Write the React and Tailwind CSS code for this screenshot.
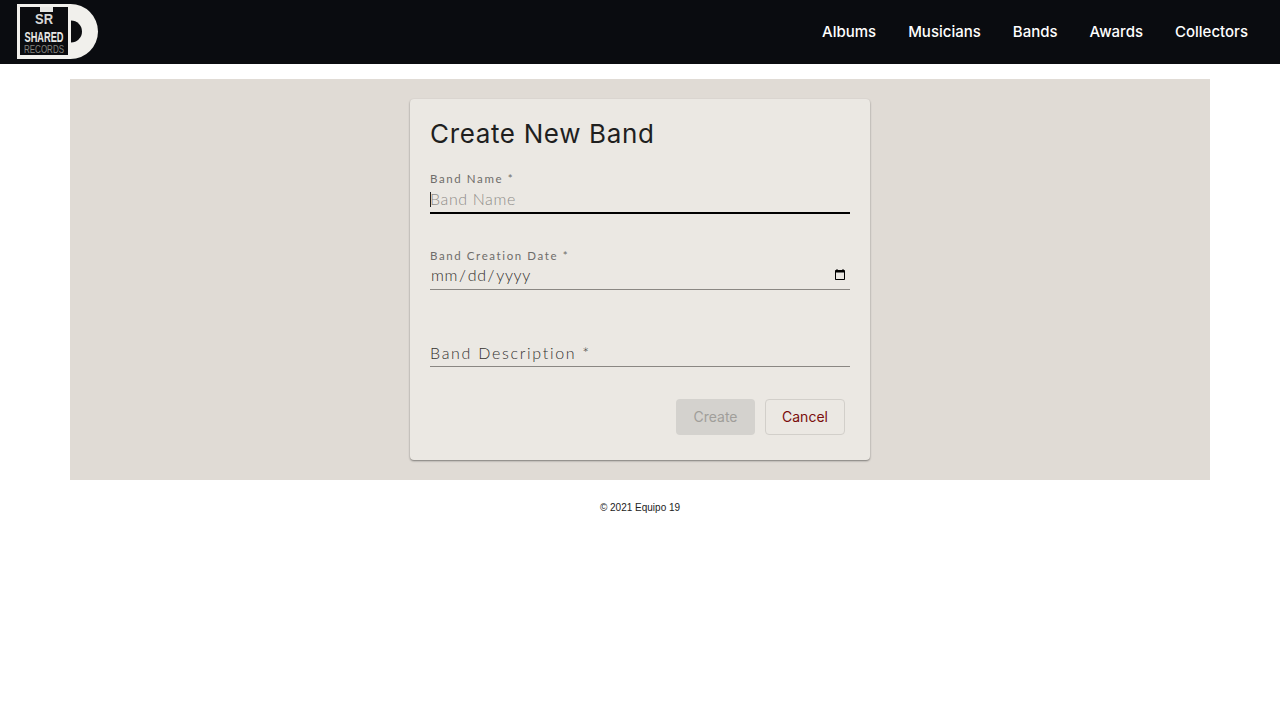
import React from "react";

const sans = "font-['Inter','Noto_Sans',sans-serif]";
const thin = "font-['Lato','Noto_Sans',sans-serif]";

function Logo() {
  return (
    <svg width="84" height="58" viewBox="0 0 84 58" className="block">
      <circle cx="55.5" cy="28.5" r="27.5" fill="#f1f0ec" />
      <circle cx="56" cy="28.5" r="11" fill="#0b0c0f" />
      <path d="M2 1H56V56H2Z" fill="#f1f0ec" />
      <path d="M5 4H53V52H5Z" fill="#0b0c0f" />
      <path d="M25 4H38V9H25Z" fill="#e6e6e3" />
      <text x="29" y="21" textAnchor="middle" fontFamily="'Liberation Sans',sans-serif" fontWeight="700" fontSize="15" fill="#d8d8d6" textLength="18" lengthAdjust="spacingAndGlyphs">SR</text>
      <text x="29" y="39" textAnchor="middle" fontFamily="'Liberation Sans',sans-serif" fontWeight="700" fontSize="14" fill="#e8e8e6" textLength="39" lengthAdjust="spacingAndGlyphs">SHARED</text>
      <text x="29" y="50" textAnchor="middle" fontFamily="'Liberation Sans',sans-serif" fontSize="11" fill="#85857f" textLength="40" lengthAdjust="spacingAndGlyphs">RECORDS</text>
    </svg>
  );
}

function NavLink({ children }) {
  return (
    <a className={`flex h-[34px] items-center rounded-md px-4 text-[15px] font-medium leading-none text-white ${sans}`}>
      {children}
    </a>
  );
}

function Field({ label, children, className = "h-10 border-b border-[#8a8783]" }) {
  return (
    <div className={`relative flex flex-col justify-end ${className}`}>
      {label && (
        <label className={`absolute left-0 top-[-1px] text-[11.5px] leading-[13px] tracking-[1.6px] text-[#6f6d6a] ${thin}`}>
          {label}
        </label>
      )}
      {children}
    </div>
  );
}

export default function App() {
  return (
    <div className="min-h-[720px] bg-white">
      <header className="flex h-16 items-center justify-between bg-[#0a0c10] pl-[15px] pr-4">
        <Logo />
        <nav className="mb-[2px] flex items-center">
          <NavLink>Albums</NavLink>
          <NavLink>Musicians</NavLink>
          <NavLink>Bands</NavLink>
          <NavLink>Awards</NavLink>
          <NavLink>Collectors</NavLink>
        </nav>
      </header>

      <main className="mx-[70px] mt-[15px] flex justify-center bg-[#e0dbd5] py-5">
        <section className="h-[361px] w-[460px] rounded bg-[#ebe8e3] p-5 shadow-[0_1px_2px_rgba(0,0,0,0.45)]">
          <h1 className={`text-[26px] font-normal leading-[30px] tracking-[0.65px] text-[#1f1f1f] ${sans}`}>
            Create New Band
          </h1>

          <div className="mt-6 flex flex-col gap-9">
            <Field label="Band Name *" className="h-[41px] border-b-2 border-black pb-px">
              <span className="absolute bottom-[5px] left-0 h-[15px] w-px bg-[#222]" />
              <input
                placeholder="Band Name"
                className={`h-6 w-full bg-transparent text-[16px] font-light tracking-[0.6px] outline-none placeholder:text-[#8f8d89] ${thin}`}
              />
            </Field>
            <Field label="Band Creation Date *" className="h-10 border-b border-[#8a8783] pb-[2px]">
              <input
                type="date"
                className={`h-6 w-full bg-transparent text-[16px] font-light tracking-[0.65px] text-[#2f2d2a] outline-none [&::-webkit-calendar-picker-indicator]:scale-[0.8] ${thin}`}
              />
            </Field>
            <Field className="h-[41px] border-b border-[#8a8783]">
              <span className={`pb-[3px] text-[16px] font-light leading-5 tracking-[1.7px] text-[#33312f] ${thin}`}>
                Band Description *
              </span>
            </Field>
          </div>

          <div className="mr-[5px] mt-[32px] flex justify-end gap-[10px]">
            <button className={`h-9 w-[79px] rounded bg-[#d4d2ce] text-sm text-[#a09e9a] ${sans}`}>Create</button>
            <button className={`h-9 w-[80px] rounded border border-[#d2cfca] text-sm text-[#7a0c0c] ${sans}`}>Cancel</button>
          </div>
        </section>
      </main>

      <footer className="mt-[21px] text-center font-['Liberation_Sans',sans-serif] text-[10px] leading-[14px] text-[#222]">
        © 2021 Equipo 19
      </footer>
    </div>
  );
}
